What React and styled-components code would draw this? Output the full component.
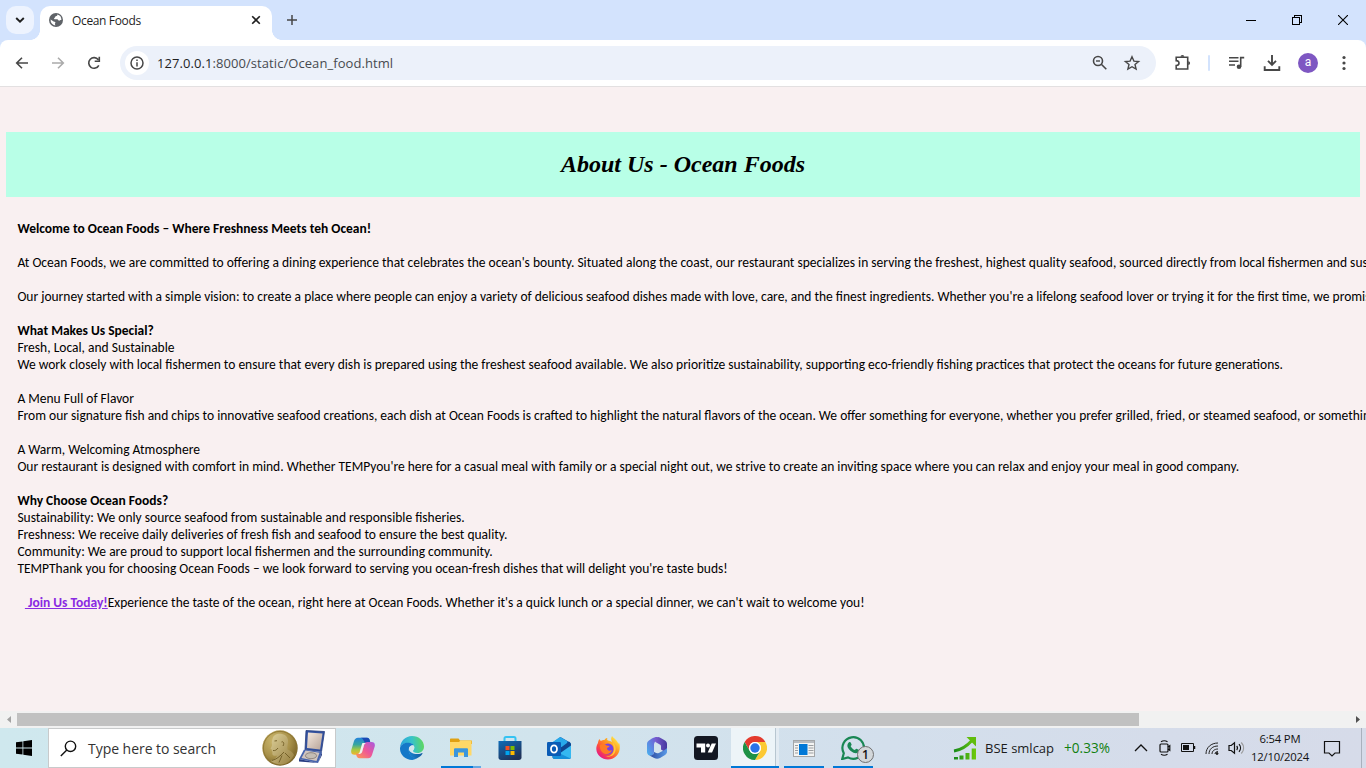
import React from "react";
import styled, { createGlobalStyle } from "styled-components";

const Global = createGlobalStyle`
  *, *::before, *::after { box-sizing: border-box; }
  html, body { margin: 0; padding: 0; overflow: hidden; }
  svg { display: block; flex: none; }
`;

const Screen = styled.div`
  width: 1366px;
  height: 768px;
  display: flex;
  flex-direction: column;
  overflow: hidden;
  background: #d3e3fd;
  font-family: "Open Sans", "Noto Sans", sans-serif;
`;

/* ---------- tab strip ---------- */
const TabStrip = styled.header`
  height: 40px;
  display: flex;
  align-items: flex-start;
  background: #d3e3fd;
`;
const TabSearch = styled.button`
  width: 28px;
  height: 28px;
  margin: 6px 6px 0;
  padding: 0;
  border: 0;
  border-radius: 10px;
  background: #edf3fe;
  display: grid;
  place-items: center;
`;
const Tab = styled.div`
  position: relative;
  width: 232px;
  height: 34px;
  margin-top: 6px;
  padding: 0 10px 6px 9px;
  border-radius: 10px 10px 0 0;
  background: #fff;
  display: flex;
  align-items: center;
  &::before, &::after {
    content: "";
    position: absolute;
    bottom: 0;
    width: 10px;
    height: 10px;
  }
  &::before { left: -10px; background: radial-gradient(circle at 0 0, transparent 9.6px, #fff 10.2px); }
  &::after { right: -10px; background: radial-gradient(circle at 100% 0, transparent 9.6px, #fff 10.2px); }
`;
const TabTitle = styled.span`
  flex: 1;
  margin-left: 9px;
  padding-top: 1px;
  font-size: 12px;
  line-height: 16px;
  letter-spacing: -0.35px;
  color: #1f1f1f;
  white-space: nowrap;
`;
const NewTab = styled.div`
  margin: 14px 0 0 14px;
`;
const WindowButtons = styled.div`
  margin-left: auto;
  height: 40px;
  display: flex;
  align-items: center;
`;
const WindowButton = styled.div`
  width: 46px;
  height: 40px;
  display: grid;
  place-items: center;
`;

/* ---------- toolbar ---------- */
const Toolbar = styled.div`
  height: 47px;
  padding: 0 14px 1px;
  display: flex;
  align-items: center;
  background: #fff;
  border-bottom: 1px solid #e3e0e1;
  border-radius: 8px 8px 0 0;
`;
const NavGroup = styled.div`
  display: flex;
  gap: 20px;
  width: 106px;
`;
const Omnibox = styled.div`
  width: 1036px;
  height: 34px;
  padding: 0 15px 0 5px;
  border-radius: 17px;
  background: #ecf1fa;
  display: flex;
  align-items: center;
`;
const SiteInfo = styled.span`
  width: 24px;
  height: 24px;
  border-radius: 50%;
  background: #fff;
  display: grid;
  place-items: center;
`;
const Url = styled.span`
  flex: 1;
  margin-left: 8px;
  font-size: 13px;
  line-height: 20px;
  letter-spacing: 0.07px;
  color: #474a4f;
  b { font-weight: 400; color: #1f1f1f; }
`;
const OmniActions = styled.div`
  display: flex;
  gap: 14px;
`;
const Extensions = styled.div`
  flex: 1;
  margin-left: 18px;
  display: flex;
  align-items: center;
`;
const Separator = styled.span`
  width: 2px;
  height: 16px;
  margin: 0 18px 0 16px;
  border-radius: 1px;
  background: #d3e3fd;
`;
const MediaActions = styled.div`
  display: flex;
  gap: 17px;
`;
const Avatar = styled.span`
  width: 20px;
  height: 20px;
  margin: 0 23px 0 17px;
  border-radius: 50%;
  background: #7e57c2;
  color: #fff;
  font: 12px/19px Roboto, sans-serif;
  text-align: center;
`;

/* ---------- page ---------- */
const Viewport = styled.main`
  height: 624px;
  padding: 45px 6px 0;
  background: #f9f0f1;
  overflow: hidden;
`;
const Banner = styled.h1`
  height: 65px;
  margin: 0 0 23px;
  background: #b8ffe7;
  color: #000;
  font: italic 700 24px/64px "Times New Roman", "Liberation Serif", serif;
  text-align: center;
`;
const Copy = styled.div`
  padding-left: 11.4px;
  font-family: Calibri, Carlito, Lato, sans-serif;
  font-size: 13.512px;
  line-height: 17px;
  color: #000;
`;
const Line = styled.div`
  height: 17px;
  white-space: pre;
  font-weight: ${(p) => (p.$bold ? 700 : 400)};
`;
const JoinLink = styled.a`
  margin-left: 7.5px;
  color: #8a2be2;
  font-weight: 700;
  text-decoration: underline;
`;

/* ---------- scrollbar ---------- */
const ScrollBar = styled.div`
  height: 17px;
  display: flex;
  align-items: center;
  background: #f1f1f1;
`;
const ScrollArrow = styled.span`
  width: 17px;
  height: 17px;
  display: grid;
  place-items: center;
`;
const ScrollTrack = styled.div`
  flex: 1;
  height: 13px;
`;
const ScrollThumb = styled.div`
  width: 1122px;
  height: 13px;
  background: #c1c1c1;
`;

/* ---------- taskbar ---------- */
const Taskbar = styled.footer`
  height: 40px;
  display: flex;
  background: linear-gradient(90deg, #cfe8ee 0, #d1e4ed 40%, #d3dfec 65%, #d5dcea 85%, #d6dbe9 100%);
`;
const StartButton = styled.div`
  width: 48px;
  display: grid;
  place-items: center;
`;
const SearchBox = styled.div`
  width: 288px;
  height: 40px;
  padding: 0 8px 0 11px;
  border: 1px solid #c8cacb;
  background: #fff;
  display: flex;
  align-items: center;
`;
const SearchText = styled.span`
  flex: 1;
  margin-left: 11px;
  padding-top: 1px;
  font-size: 14px;
  line-height: 20px;
  letter-spacing: -0.04px;
  color: #333;
`;
const Apps = styled.div`
  display: flex;
  margin-left: 2px;
`;
const AppButton = styled.div`
  position: relative;
  width: 49px;
  height: 40px;
  display: grid;
  place-items: center;
  background: ${(p) => (p.$active ? "linear-gradient(90deg, transparent 1px, #edf4f8 1px, #edf4f8 45px, #b8c6d0 45px, #b8c6d0 46px, #e3ebf2 46px, #e3ebf2 49px)" : "none")};
  &::after {
    content: "";
    position: absolute;
    left: ${(p) => (p.$active ? 1 : 5)}px;
    bottom: 0;
    width: ${(p) => (p.$active ? 48 : 40)}px;
    height: 2px;
    background: ${(p) => (p.$split ? "linear-gradient(90deg, #0078d7 32px, #66a8e3 32px)" : "#0078d7")};
    display: ${(p) => (p.$open ? "block" : "none")};
  }
`;
const CountBadge = styled.span`
  position: absolute;
  left: 29px;
  top: 18px;
  width: 17px;
  height: 17px;
  border: 1px solid #707070;
  border-radius: 50%;
  background: #d3d7da;
  color: #111;
  font-size: 12px;
  font-weight: 600;
  line-height: 15px;
  text-align: center;
`;
const Tray = styled.div`
  margin-left: auto;
  width: 413px;
  display: flex;
  align-items: center;
`;
const Ticker = styled.span`
  margin-left: ${(p) => p.$gap}px;
  font-size: ${(p) => p.$size}px;
  line-height: 20px;
  color: ${(p) => (p.$up ? "#108010" : "#1b1b1b")};
  white-space: nowrap;
`;
const TrayIcons = styled.div`
  margin-left: 24px;
  display: flex;
  align-items: center;
  gap: 9px;
`;
const Clock = styled.div`
  width: 64px;
  margin-left: 3px;
  display: flex;
  flex-direction: column;
  align-items: center;
  font-size: 11.3px;
  line-height: 18px;
  letter-spacing: -0.2px;
  color: #111;
  white-space: nowrap;
`;
const ActionCenter = styled.div`
  margin-left: 11px;
`;
const ShowDesktop = styled.span`
  width: 5px;
  height: 40px;
  margin-left: auto;
  border-left: 1px solid #a9b1bd;
`;

/* ---------- drawings ---------- */
const Stroke = ({ w = 16, h = w, c = "#474747", s = 1.6, children, ...rest }) => (
  <svg width={w} height={h} viewBox={`0 0 ${w} ${h}`} fill="none" stroke={c} strokeWidth={s} {...rest}>{children}</svg>
);

const Globe = () => (
  <svg width="14" height="14" viewBox="0 0 14 14">
    <circle cx="7" cy="7" r="7" fill="#5f6368" />
    <path d="M8.2 1.6c.5 1.2-.5 1.5-1.4 1.7-.8.2-.5 1.2-1.4 1.6-.7.4-.3 1.3.6 1.3h2.2c1.1 0 .9 1.5 2 1.5.8 0 .9-.8 2.2-.7A5.4 5.4 0 0 0 8.2 1.6z" fill="#fff" />
    <path d="M1.600 6.600l3 1.900c.7.4 1.700.1 1.800 1 .1.8-.6.7-.5 1.400.1.6.5.9.4 1.500A5.400 5.400 0 0 1 1.600 6.600z" fill="#fff" />
  </svg>
);

const Medal = () => (
  <svg width="65" height="38" viewBox="0 0 65 38">
    <defs>
      <radialGradient id="gold" cx=".35" cy=".3" r=".8">
        <stop offset="0" stopColor="#cdb96f" /><stop offset=".55" stopColor="#a8914a" /><stop offset="1" stopColor="#6b5620" />
      </radialGradient>
      <linearGradient id="bust" x1="0" x2="1" y1="0" y2="1"><stop stopColor="#ddd09a" /><stop offset="1" stopColor="#947c3c" /></linearGradient>
      <linearGradient id="lid" x1="0" x2="1" y1="0" y2="1"><stop stopColor="#f6e9df" /><stop offset="1" stopColor="#b6a398" /></linearGradient>
    </defs>
    <circle cx="18" cy="19" r="17.700" fill="url(#gold)" />
    <circle cx="18" cy="19" r="16.600" fill="none" stroke="#8b7430" strokeWidth=".8" />
    <path d="M10.500 10c1-4 4-5.500 8-5.200 5 .4 8 3.500 7.500 8.200-.2 3-1 5-.5 7.500 3 1 5.500 3 6.500 5.500-2 5-7 9-13 9.500-4 0-8-1.500-10-3.500 3-1 5-3 6.500-5.500-2 .5-4.500.5-5-1-.4-1 .2-2-.3-3-.5-.7-.6-1.200-.2-1.800l-1.500-.9c.8-1.700 1.800-3 1.500-4.600-.4-1.700-.1-3.400.5-5.200z" fill="url(#bust)" />
    <path d="M11 21.500c2 .4 3.500-.4 5-2.500M19.500 13c2-1 3 1.500 1.500 4M12.500 12l2.500-.3M10 31.500c4-1 8-4 12-8.500M17 33.500l3-7M23 24l5 5" stroke="#6e5a22" strokeWidth=".9" fill="none" />
    <path d="M44 1.500l18.500 1-3 20L43 20.500z" fill="#33519f" stroke="#263c7d" strokeWidth=".8" />
    <path d="M46 3.500l14.500 1-2.400 16L45 19z" fill="url(#lid)" />
    <path d="M42 20.500L60 23l-4 11-19-4z" fill="#4664ad" />
    <path d="M43.500 21.500l14 2.200-3 8.300-15-3z" fill="#d1c5bf" />
    <path d="M37 30l19 4 4-11v3l-4 8-19-1.500z" fill="#263c82" />
    <ellipse cx="49" cy="26.700" rx="5.600" ry="3" fill="#c4bdb4" stroke="#827a74" strokeWidth=".8" />
  </svg>
);

const Copilot = () => (
  <svg width="24" height="24" viewBox="0 0 24 24">
    <defs>
      <linearGradient id="cpa" x1="0" x2="0" y1="0" y2="1"><stop offset="0" stopColor="#2382dc" /><stop offset=".4" stopColor="#35a6a0" /><stop offset=".7" stopColor="#a3c943" /><stop offset="1" stopColor="#f4b32c" /></linearGradient>
      <linearGradient id="cpb" x1="1" x2="0" y1="0" y2="1"><stop offset="0" stopColor="#a75be0" /><stop offset=".5" stopColor="#ee5797" /><stop offset="1" stopColor="#ff9a50" /></linearGradient>
    </defs>
    <path d="M7 1.700h9c2 0 2.500 1.500 3 3.500l.5 2h-4c-1.500 0-2.200.8-2.600 2l-2 7c-.6 1.800-1.500 2.500-3.500 2.500H3.500C.8 18.700-.3 17 .3 14L3 5c.6-2 2-3.300 4-3.300z" fill="url(#cpa)" />
    <path d="M12 1.700h4c2 0 2.500 1.500 3 3.500l.5 2h-4.500c-2 0-2.500-5.500-5.500-5.500z" fill="#1b49b5" />
    <path d="M17 22.300H8.500c-2 0-2.800-1.500-3.200-3.200l-.3-1.300h3.300c1.500 0 2.200-.8 2.600-2l2.200-7.300c.6-1.800 1.500-2.500 3.400-2.500h4c2.700 0 3.800 1.800 3.200 4.600L21 19c-.6 2-2 3.300-4 3.300z" fill="url(#cpb)" />
    <path d="M11.500 7h4c-1.500.3-2 1-2.400 2l-2 7c-.4 1.200-1.200 1.800-2.500 2H6.500c1.300 0 1.800-.8 2.200-2l2-7c.2-.8.4-1.500.8-2z" fill="#eef1f0" />
  </svg>
);

const Edge = () => (
  <svg width="24" height="24" viewBox="0 0 24 24">
    <defs>
      <linearGradient id="ea" x1="0" x2="1" y1=".3" y2=".2"><stop offset="0" stopColor="#2aa5dc" /><stop offset=".5" stopColor="#38c3c8" /><stop offset="1" stopColor="#62d957" /></linearGradient>
      <linearGradient id="eb" x1="0" x2="1"><stop offset="0" stopColor="#1a84d0" /><stop offset="1" stopColor="#115a9e" /></linearGradient>
    </defs>
    <path d="M0 11.500C.5 5 5.500 0 12 0c7 0 12 5 12 10.500 0 4-3 6.500-6.500 6.500-3 0-4.500-1-4.500-2s1.300-1.500 1.300-3.500C14.300 9 12 7 8.500 7 4 7 1 9 0 11.500z" fill="url(#ea)" />
    <path d="M0 12c.8-3.200 4-5.300 8.500-5.200 2.500 0 4.500 1 5.300 2.700-2-1-5 .5-5 4.500 0 5 4.500 8 8.500 8a12 12 0 0 1-5 2C5 24-.3 18.500 0 12z" fill="#1478c8" />
    <path d="M8.800 13.500C8 18 12 22.500 17 22.200c2.500-1 4.500-2.700 5.500-4.700.2-.5-.2-.7-.6-.5-1 .6-2.400 1-4 1-4.400 0-8.200-2.300-8.200-5z" fill="url(#eb)" />
    <path d="M8.800 13c.2 2.700 3.900 5 8.400 5 1.500 0 2.700-.2 4-.8-2 .3-5 .3-6.500-.5-1.500-.7-1.800-1.300-1.700-2 .2-.8 1.300-1.300 1.300-3.200 0-1-.4-1.500-.9-1.800-2-.8-4.500.5-4.600 3.300z" fill="#d5e6ec" />
  </svg>
);

const Explorer = () => (
  <svg width="22" height="20" viewBox="0 0 22 20">
    <path d="M0 1.500c0-.6.400-1 1-1h7.500l1.500 2H21c.6 0 1 .4 1 1V6H0z" fill="#e0a112" />
    <path d="M0 4h9l1.500-1.500H21.500V17.500H0z" fill="#ffd867" />
    <path d="M4 19V11.500c0-.8.500-1.300 1.300-1.300h11.400c.8 0 1.300.5 1.300 1.300V19h-4v-4.500H8V19z" fill="#3a96dd" />
  </svg>
);

const Store = () => (
  <svg width="24" height="24" viewBox="0 0 24 24">
    <defs><linearGradient id="st" x1="0" x2=".6" y1="0" y2="1"><stop stopColor="#0f6cb8" /><stop offset="1" stopColor="#203259" /></linearGradient></defs>
    <path d="M6.500 6V2.500c0-.8.500-1.500 1.500-1.500h8c1 0 1.500.7 1.500 1.500V6" stroke="#35c3f2" strokeWidth="2" fill="none" />
    <path d="M.5 5h23v16.500c0 1.500-1 2.500-2.500 2.500H3C1.500 24 .5 23 .5 21.500z" fill="url(#st)" />
    <path d="M7.500 10h4v4h-4z" fill="#f25022" /><path d="M12.500 10h4v4h-4z" fill="#7fba00" />
    <path d="M7.500 15h4v4h-4z" fill="#00a4ef" /><path d="M12.500 15h4v4h-4z" fill="#ffb900" />
  </svg>
);

const Outlook = () => (
  <svg width="24" height="22" viewBox="0 0 24 22">
    <path d="M5 6L13.500 0l9.500 5.500L24 9v11c0 1.200-.8 2-2 2H8c-1.500 0-2.500-1-2.500-2z" fill="#1565b5" />
    <path d="M5 5.500L13 0l7 4v6H5z" fill="#28a8ea" />
    <path d="M14 12l10-6v14c0 1.200-.8 2-2 2H7.500z" fill="#35b8f1" />
    <path d="M12 12l10-7.500 2 2v2l-10 7z" fill="#0f4590" />
    <path d="M5.500 13l18 8.500c-.5.300-1 .5-1.500.5H8c-1.500 0-2.500-1-2.500-2z" fill="#1690da" />
    <rect x="0" y="5" width="14" height="14" rx="1.300" fill="#0a5bb5" />
    <ellipse cx="7" cy="12" rx="3" ry="3.700" fill="none" stroke="#fff" strokeWidth="1.800" />
  </svg>
);

const Firefox = () => (
  <svg width="24" height="24" viewBox="0 0 24 24">
    <defs>
      <linearGradient id="ff" x1=".9" x2=".15" y1=".05" y2=".9"><stop offset="0" stopColor="#fff44f" /><stop offset=".4" stopColor="#ff9a1f" /><stop offset=".7" stopColor="#ff4f3b" /><stop offset="1" stopColor="#e3178a" /></linearGradient>
    </defs>
    <path d="M2 7c0-1.500.8-3 1.500-4 .3 1 .8 1.600 1.500 2 1-.7 2-1 3.500-1C9 2.500 10.500 2 11.500 2c-.7 1-.5 2 .5 2.500 1.500.5 3 .5 4 1.500-.5-2-1.500-3 0-6 1.500 2 4 3.500 5.500 6l1 2 .3-1.500C24 8.500 24 10.500 23.700 13 23 19 18 23.500 12 23.500S.5 19 .3 13C.2 10.500 1 8.500 2 7z" fill="url(#ff)" />
    <circle cx="12" cy="13" r="5.500" fill="#7542e5" />
    <path d="M4 9c2-1.500 5-1 6.500.5l3 .5c0 1.200-2 1.500-2.500 2 0 2.500 2.500 3.500 5 2-1 3.500-4.500 5-8 3.500C5 16 3.500 12.500 4 9z" fill="#ff7b25" />
    <path d="M16 6c4 3 5 8 2 12-2 2.500-5 3.300-8 2.500 5 0 8-3.500 8-7.500 0-3-1-5-2-7z" fill="#ffc83d" />
  </svg>
);

const Copilot365 = () => (
  <svg width="20" height="22" viewBox="0 0 20 22">
    <defs>
      <linearGradient id="ma" x1="0" x2="1" y1="1" y2="0"><stop stopColor="#47b4ef" /><stop offset="1" stopColor="#7a4ed0" /></linearGradient>
      <linearGradient id="mb" x1="0" x2="1"><stop stopColor="#7c5fd0" /><stop offset="1" stopColor="#45379e" /></linearGradient>
      <linearGradient id="mc" x1="0" x2="1"><stop stopColor="#2a479d" /><stop offset="1" stopColor="#5a9be8" /></linearGradient>
    </defs>
    <path d="M10.500 0C8 0 6.500.5 4.500 1.800L2 3.500C.7 4.300 0 5.500 0 7v7.500c0 2 .8 3.500 2.500 4C5 19.300 7 17.500 7 15V8c0-2 .6-3 2-4z" fill="url(#ma)" />
    <path d="M9 .6c1.500-.8 3-.7 4.200.1L18 3.500c1.300.8 2 2 2 3.500v6c0 1-.3 2-.8 2.700L14 12.500V9.500c0-1-.4-1.600-1.200-2L8.800 5.300C7.500 4.500 7.500 1.500 9 .6z" fill="url(#mb)" />
    <path d="M20 11v3.500c0 1.500-.7 2.700-2 3.500l-5 3c-1.800 1-4 1-5.800 0L2 18.300c3 .7 5-.8 5.200-3.300l2.300 1c.8.4 1.600.3 2.300-.1L17.500 13c1.200-.6 2-1.200 2.500-2z" fill="url(#mc)" />
    <path d="M7.200 8.500c.2-1 .5-1.500 1.300-2l4.300 2.200c.8.4 1.200 1 1.200 1.800v3.700l-2.800 1.500c-.6.3-1.200.3-1.800 0l-2.200-1.200z" fill="#d4e3ed" />
  </svg>
);

const TradingView = () => (
  <svg width="24" height="24" viewBox="0 0 24 24">
    <rect width="24" height="24" rx="3.500" fill="#131722" />
    <path d="M2.500 7.500h8.700v9H7v-5H2.500z" fill="#fff" /><circle cx="14" cy="9.500" r="2" fill="#fff" />
    <path d="M17.700 7.500h4.300l-4 9h-4.300z" fill="#fff" />
  </svg>
);

const Chrome = () => (
  <svg width="24" height="24" viewBox="0 0 24 24">
    <circle cx="12" cy="12" r="12" fill="#fff" />
    <path d="M1.600 6A12 12 0 0 1 22.400 6H12a6 6 0 0 0-5.200 9z" fill="#e33b2e" />
    <path d="M22.400 6A12 12 0 0 1 12 24l5.200-9A6 6 0 0 0 12 6z" fill="#fcc934" />
    <path d="M12 24A12 12 0 0 1 1.600 6l5.200 9a6 6 0 0 0 10.400 0z" fill="#1e9146" />
    <circle cx="12" cy="12" r="6" fill="#fff" /><circle cx="12" cy="12" r="4.700" fill="#2a73e8" />
  </svg>
);

const Viewer = () => (
  <svg width="22" height="17" viewBox="0 0 22 17">
    <rect x=".5" y=".5" width="21" height="16" fill="#f4f4f2" stroke="#a3a6a8" />
    <path d="M1 1h20v2H1z" fill="#b8bcc0" />
    <path d="M6 4h8.500v11H6z" fill="#0078d7" />
    <path d="M2 5.500h3M2 8h3M2 10.500h3M2 13h3M15.500 5.500h5M15.500 8h5M15.500 10.500h5M15.500 13h5" stroke="#9b9ea1" strokeWidth="1" />
  </svg>
);

const WhatsApp = () => (
  <svg width="24" height="24" viewBox="0 0 24 24">
    <path d="M1.200 23l1.600-5.800A10.800 10.800 0 1 1 7 21.400z" fill="none" stroke="#198754" strokeWidth="2.200" />
    <path d="M8.500 6c.5-.2 1 0 1.200.5l.9 2c.1.500-.7 1.300-.9 1.700 1 1.900 2.300 3 4.100 3.800.5-.3 1.100-1.500 1.700-1.300l2.200 1.100c.6.300.2 2.200-.7 2.800-3.500 2-8.500-2-10.200-5.200C5.700 9.200 7.200 6.500 8.500 6z" fill="#198754" />
  </svg>
);

const StockChart = () => (
  <svg width="24" height="24" viewBox="0 0 24 24">
    <defs><linearGradient id="gr" gradientUnits="userSpaceOnUse" x1="1" x2="23" y1="0" y2="0"><stop stopColor="#168a1a" /><stop offset="1" stopColor="#6fcb0c" /></linearGradient></defs>
    <path d="M1 15C8 14 14 10 19 4.500" stroke="url(#gr)" strokeWidth="3" fill="none" />
    <path d="M13.500 1H23v9.500z" fill="#61bd0c" />
    <path d="M1 21h4v2.500H1zM6.500 19.500h4v4h-4zM12.500 17h4v6.500h-4zM18.700 12.500H23v11h-4.300z" fill="url(#gr)" />
  </svg>
);

const lines = [
  ["Welcome to Ocean Foods – Where Freshness Meets teh Ocean!", true],
  [""],
  ["At Ocean Foods, we are committed to offering a dining experience that celebrates the ocean's bounty. Situated along the coast, our restaurant specializes in serving the freshest, highest quality seafood, sourced directly from local fishermen and sustainable"],
  [""],
  ["Our journey started with a simple vision: to create a place where people can enjoy a variety of delicious seafood dishes made with love, care, and the finest ingredients. Whether you're a lifelong seafood lover or trying it for the first time, we promise"],
  [""],
  ["What Makes Us Special?", true],
  ["Fresh, Local, and Sustainable"],
  ["We work closely with local fishermen to ensure that every dish is prepared using the freshest seafood available. We also prioritize sustainability, supporting eco-friendly fishing practices that protect the oceans for future generations."],
  [""],
  ["A Menu Full of Flavor"],
  ["From our signature fish and chips to innovative seafood creations, each dish at Ocean Foods is crafted to highlight the natural flavors of the ocean. We offer something for everyone, whether you prefer grilled, fried, or steamed seafood, or something"],
  [""],
  ["A Warm, Welcoming Atmosphere"],
  ["Our restaurant is designed with comfort in mind. Whether TEMPyou're here for a casual meal with family or a special night out, we strive to create an inviting space where you can relax and enjoy your meal in good company."],
  [""],
  ["Why Choose Ocean Foods?", true],
  ["Sustainability: We only source seafood from sustainable and responsible fisheries."],
  ["Freshness: We receive daily deliveries of fresh fish and seafood to ensure the best quality."],
  ["Community: We are proud to support local fishermen and the surrounding community."],
  ["TEMPThank you for choosing Ocean Foods – we look forward to serving you ocean-fresh dishes that will delight you're taste buds!"],
  [""],
];

export default function App() {
  return (
    <Screen>
      <Global />
      <TabStrip>
        <TabSearch><Stroke w={10} h={6} c="#1f1f1f" s={1.9}><path d="M1.200 1L5 4.700 8.800 1" /></Stroke></TabSearch>
        <Tab>
          <Globe />
          <TabTitle>Ocean Foods</TabTitle>
          <Stroke w={12} c="#1f1f1f" s={1.6}><path d="M2.200 2.200l7.600 7.600M9.800 2.200L2.200 9.800" /></Stroke>
        </Tab>
        <NewTab><Stroke w={12} c="#474747" s={1.5}><path d="M6 1v10M1 6h10" /></Stroke></NewTab>
        <WindowButtons>
          <WindowButton><Stroke w={10} c="#000" s={1} shapeRendering="crispEdges"><path d="M0 5.500h10" /></Stroke></WindowButton>
          <WindowButton><Stroke w={10} c="#000" s={1} shapeRendering="crispEdges"><path d="M.5 2.500h7v7h-7zM2.500 2.500v-2h7v7h-2" /></Stroke></WindowButton>
          <WindowButton><Stroke w={10} c="#000" s={1.1}><path d="M0 0l10 10M10 0L0 10" /></Stroke></WindowButton>
        </WindowButtons>
      </TabStrip>

      <Toolbar>
        <NavGroup>
          <Stroke><path d="M14 8H3M8 2.700L2.700 8 8 13.300" /></Stroke>
          <Stroke c="#ababab"><path d="M2 8h11M8 2.700L13.300 8 8 13.300" /></Stroke>
          <Stroke><path d="M12.800 10.300A5.300 5.300 0 1 1 12.300 4.800M13.300 1.700V6.300H8.700" /></Stroke>
        </NavGroup>
        <Omnibox>
          <SiteInfo><Stroke w={14} s={1.5}><circle cx="7" cy="7" r="6" /><path d="M7 6.200v4.200M7 3.500v1.600" /></Stroke></SiteInfo>
          <Url><b>127.0.0.1</b>:8000/static/Ocean_food.html</Url>
          <OmniActions>
            <Stroke w={18}><circle cx="7" cy="7" r="4.500" /><path d="M10.300 10.300l5 5" /><path d="M5 7h4" strokeWidth="1.400" /></Stroke>
            <Stroke w={18} s={1.4}><path d="M9 2.800l1.900 4.300 4.700.4-3.600 3 1.100 4.600L9 12.700l-4.100 2.400L6 10.500l-3.600-3 4.700-.4z" /></Stroke>
          </OmniActions>
        </Omnibox>
        <Extensions>
          <Stroke w={18}><path d="M2.200 3.200H13.700V15H2.200V11.600C4 11.600 5 10.500 5 9.100S4 6.600 2.200 6.600z" /><path d="M6.500 2.800a1.900 1.900 0 0 1 3.800 0zM14.200 7.200a1.900 1.900 0 0 1 0 3.800z" fill="#474747" stroke="none" /></Stroke>
          <Separator />
          <MediaActions>
            <Stroke w={18}><path d="M1 3.700h9.500M1 7.300h9.500M1 11h6" /><path d="M12.700 12.700V3.600h3.500" /><circle cx="11" cy="12.700" r="2.300" fill="#474747" stroke="none" /></Stroke>
            <Stroke w={18} s={1.9}><path d="M9 1v9.500M5 6.800l4 4 4-4M1.700 12.200V16h14.600v-3.800" /></Stroke>
          </MediaActions>
          <Avatar>a</Avatar>
          <svg width="6" height="16" viewBox="0 0 6 16" fill="#474747"><circle cx="3" cy="2.500" r="1.600" /><circle cx="3" cy="8" r="1.600" /><circle cx="3" cy="13.500" r="1.600" /></svg>
        </Extensions>
      </Toolbar>

      <Viewport>
        <Banner>About Us - Ocean Foods</Banner>
        <Copy>
          {lines.map(([text, bold], i) => <Line key={i} $bold={bold}>{text}</Line>)}
          <Line><JoinLink> Join Us Today!</JoinLink>Experience the taste of the ocean, right here at Ocean Foods. Whether it's a quick lunch or a special dinner, we can't wait to welcome you!</Line>
        </Copy>
      </Viewport>

      <ScrollBar>
        <ScrollArrow><svg width="4" height="7" viewBox="0 0 4 7"><path d="M4 0v7L0 3.500z" fill="#a3a3a3" /></svg></ScrollArrow>
        <ScrollTrack><ScrollThumb /></ScrollTrack>
        <ScrollArrow><svg width="4" height="7" viewBox="0 0 4 7"><path d="M0 0v7l4-3.500z" fill="#505050" /></svg></ScrollArrow>
      </ScrollBar>

      <Taskbar>
        <StartButton>
          <svg width="16" height="16" viewBox="0 0 16 16"><path d="M0 2.300l6.500-.9v6.100H0zM7.300 1.300L16 0v7.500H7.300zM0 8.400h6.500v6.200L0 13.700zM7.300 8.400H16V16l-8.700-1.300z" /></svg>
        </StartButton>
        <SearchBox>
          <Stroke w={17} c="#111" s={1.4}><circle cx="10.500" cy="6.300" r="5.200" /><path d="M6.800 10L.8 16" /></Stroke>
          <SearchText>Type here to search</SearchText>
          <Medal />
        </SearchBox>
        <Apps>
          <AppButton><Copilot /></AppButton>
          <AppButton><Edge /></AppButton>
          <AppButton $open $split><Explorer /></AppButton>
          <AppButton><Store /></AppButton>
          <AppButton><Outlook /></AppButton>
          <AppButton><Firefox /></AppButton>
          <AppButton><Copilot365 /></AppButton>
          <AppButton><TradingView /></AppButton>
          <AppButton $open $active><Chrome /></AppButton>
          <AppButton $open><Viewer /></AppButton>
          <AppButton $open><WhatsApp /><CountBadge>1</CountBadge></AppButton>
        </Apps>
        <Tray>
          <StockChart />
          <Ticker $gap={8} $size={13}>BSE smlcap</Ticker>
          <Ticker $gap={10} $size={13.6} $up>+0.33%</Ticker>
          <TrayIcons>
            <Stroke w={14} h={14} c="#111" s={1.3}><path d="M1 10l6-6 6 6" /></Stroke>
            <Stroke w={14} h={16} c="#111" s={1.2}><rect x="3" y="4" width="8" height="8" rx="1" /><path d="M11 7l1.800-1.300v4.600L11 9M4 1.800c2-1.300 4.500-1.300 6.500 0M4 14.200c2 1.300 4.500 1.300 6.500 0" /></Stroke>
            <Stroke w={16} h={14} c="#111" s={1}><path d="M1.500 2.500h12v8h-12z" /><path d="M3 4h6v5H3z" fill="#111" stroke="none" /><path d="M14.500 5v3" strokeWidth="1.500" /></Stroke>
            <Stroke w={14} h={14} c="#222" s={1}><path d="M1 13C1 6.500 6 2 13 2M4 13C4 8.300 7.500 5 13 5M7 13c0-3 2.500-5 6-5M10 13c0-1.500 1-2.400 3-2.400" /><circle cx="12" cy="12.500" r="1" fill="#111" /></Stroke>
            <Stroke w={17} h={14} c="#111" s={1.2}><path d="M1 4.500h2.200L6.500 1.700v10.600L3.200 9.500H1z" /><path d="M8.700 5c1 1.200 1 2.800 0 4M11 3.200c2 2.200 2 5.400 0 7.600" /><path d="M13.300 1.500c3 3.300 3 7.700 0 11" stroke="#999" /></Stroke>
          </TrayIcons>
          <Clock><span>6:54 PM</span><span>12/10/2024</span></Clock>
          <ActionCenter><Stroke w={18} h={17} c="#111" s={1.2}><path d="M1.500 1.500h15v11.500H12l-3 3-3-3H1.500z" /></Stroke></ActionCenter>
          <ShowDesktop />
        </Tray>
      </Taskbar>
    </Screen>
  );
}
